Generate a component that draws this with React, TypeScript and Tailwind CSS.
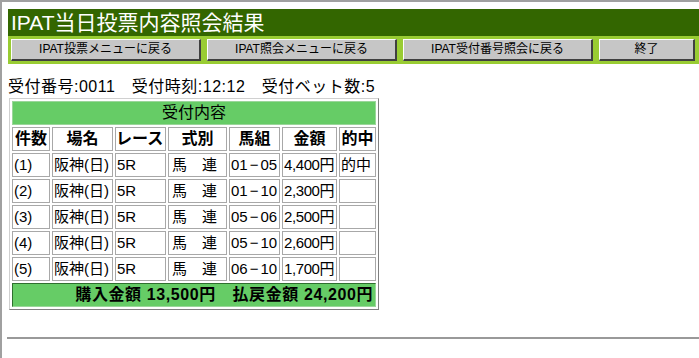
import React from 'react';

const rows = [
  { no: '(1)', place: '阪神(日)', race: '5R', kind: '馬　連', combo: ['01', '05'], amount: '4,400円', hit: '的中' },
  { no: '(2)', place: '阪神(日)', race: '5R', kind: '馬　連', combo: ['01', '10'], amount: '2,300円', hit: '' },
  { no: '(3)', place: '阪神(日)', race: '5R', kind: '馬　連', combo: ['05', '06'], amount: '2,500円', hit: '' },
  { no: '(4)', place: '阪神(日)', race: '5R', kind: '馬　連', combo: ['05', '10'], amount: '2,600円', hit: '' },
  { no: '(5)', place: '阪神(日)', race: '5R', kind: '馬　連', combo: ['06', '10'], amount: '1,700円', hit: '' },
];

const buttons = [
  { label: 'IPAT投票メニューに戻る', w: 'w-[190px]' },
  { label: 'IPAT照会メニューに戻る', w: 'w-[190px]' },
  { label: 'IPAT受付番号照会に戻る', w: 'w-[190px]' },
  { label: '終了', w: 'w-[96px]' },
];

const colWidths = [38, 61, 51, 59, 51, 55, 37];

const cell =
  'border border-[#a8a8a8] bg-white h-[24px] p-0 pl-[1px] text-left align-middle whitespace-nowrap overflow-hidden text-[15px]';
const head =
  'border border-[#a8a8a8] bg-white h-[24px] p-0 text-center align-middle font-bold whitespace-nowrap overflow-hidden';

export default function App() {
  return (
    <div
      className="h-[358px] overflow-hidden bg-white border-t-2 border-l-2 border-[#a0a0a0] text-black"
      style={{ fontFamily: '"Liberation Sans", "Noto Sans CJK JP", sans-serif' }}
    >
      {/* Title bar */}
      <div className="mt-[7px] ml-[6px]">
        <div className="h-[27px] bg-[#336600] text-white text-[21px] leading-[27px] pl-[3px] whitespace-nowrap">
          IPAT当日投票内容照会結果
        </div>
        <div className="h-[28px] bg-[#99cc33] flex items-start gap-[6px] pl-[3px] pt-[3px]">
          {buttons.map((b) => (
            <div
              key={b.label}
              className={`${b.w} h-[22px] shrink-0 bg-[#c6c6c6] border-t border-l border-white border-r-2 border-b-2 border-r-[#404040] border-b-[#404040] text-[12px] leading-[19px] text-center whitespace-nowrap`}
            >
              {b.label}
            </div>
          ))}
        </div>
      </div>

      {/* Info line */}
      <div className="mt-[13px] ml-[6px] text-[16px] leading-[20px] tracking-[0.5px] whitespace-pre">
        受付番号:0011　受付時刻:12:12　受付ベット数:5
      </div>

      {/* Result table */}
      <table className="table-fixed w-[370px] ml-[7px] mt-[1px] border-separate border-spacing-[2px] border border-t-[#d0d0d0] border-l-[#d0d0d0] border-r-[#808080] border-b-[#808080] text-[16px] leading-[20px]">
        <colgroup>
          {colWidths.map((w, i) => (
            <col key={i} style={{ width: w }} />
          ))}
        </colgroup>
        <tbody>
          <tr>
            <td colSpan={7} className="h-[24px] bg-[#66cc66] text-center p-0 border border-[#9ad69a]">
              受付内容
            </td>
          </tr>
          <tr>
            <td className={head}>件数</td>
            <td className={head}>場名</td>
            <td className={`${head} text-left`}>レース</td>
            <td className={head}>式別</td>
            <td className={head}>馬組</td>
            <td className={head}>金額</td>
            <td className={head}>的中</td>
          </tr>
          {rows.map((r) => (
            <tr key={r.no}>
              <td className={cell}>{r.no}</td>
              <td className={cell}>{r.place}</td>
              <td className={cell}>{r.race}</td>
              <td className={`${cell} pl-[3px]`}>{r.kind}</td>
              <td className={cell}>
                {r.combo[0]}
                <span className="mx-[2px]">−</span>
                {r.combo[1]}
              </td>
              <td className={`${cell} tracking-[-0.4px]`}>{r.amount}</td>
              <td className={cell}>{r.hit}</td>
            </tr>
          ))}
          <tr>
            <td
              colSpan={7}
              className="h-[24px] bg-[#66cc66] text-right font-bold p-0 pr-[2px] tracking-[0.6px] border border-t-[#2f6f2f] border-l-[#2f6f2f] border-r-[#9ad69a] border-b-[#9ad69a] whitespace-pre"
            >
              購入金額 13,500円　払戻金額 24,200円
            </td>
          </tr>
        </tbody>
      </table>

      <hr className="mt-[27px] ml-[5px] border-0 border-t-2 border-t-[#999999] h-0" />
    </div>
  );
}
